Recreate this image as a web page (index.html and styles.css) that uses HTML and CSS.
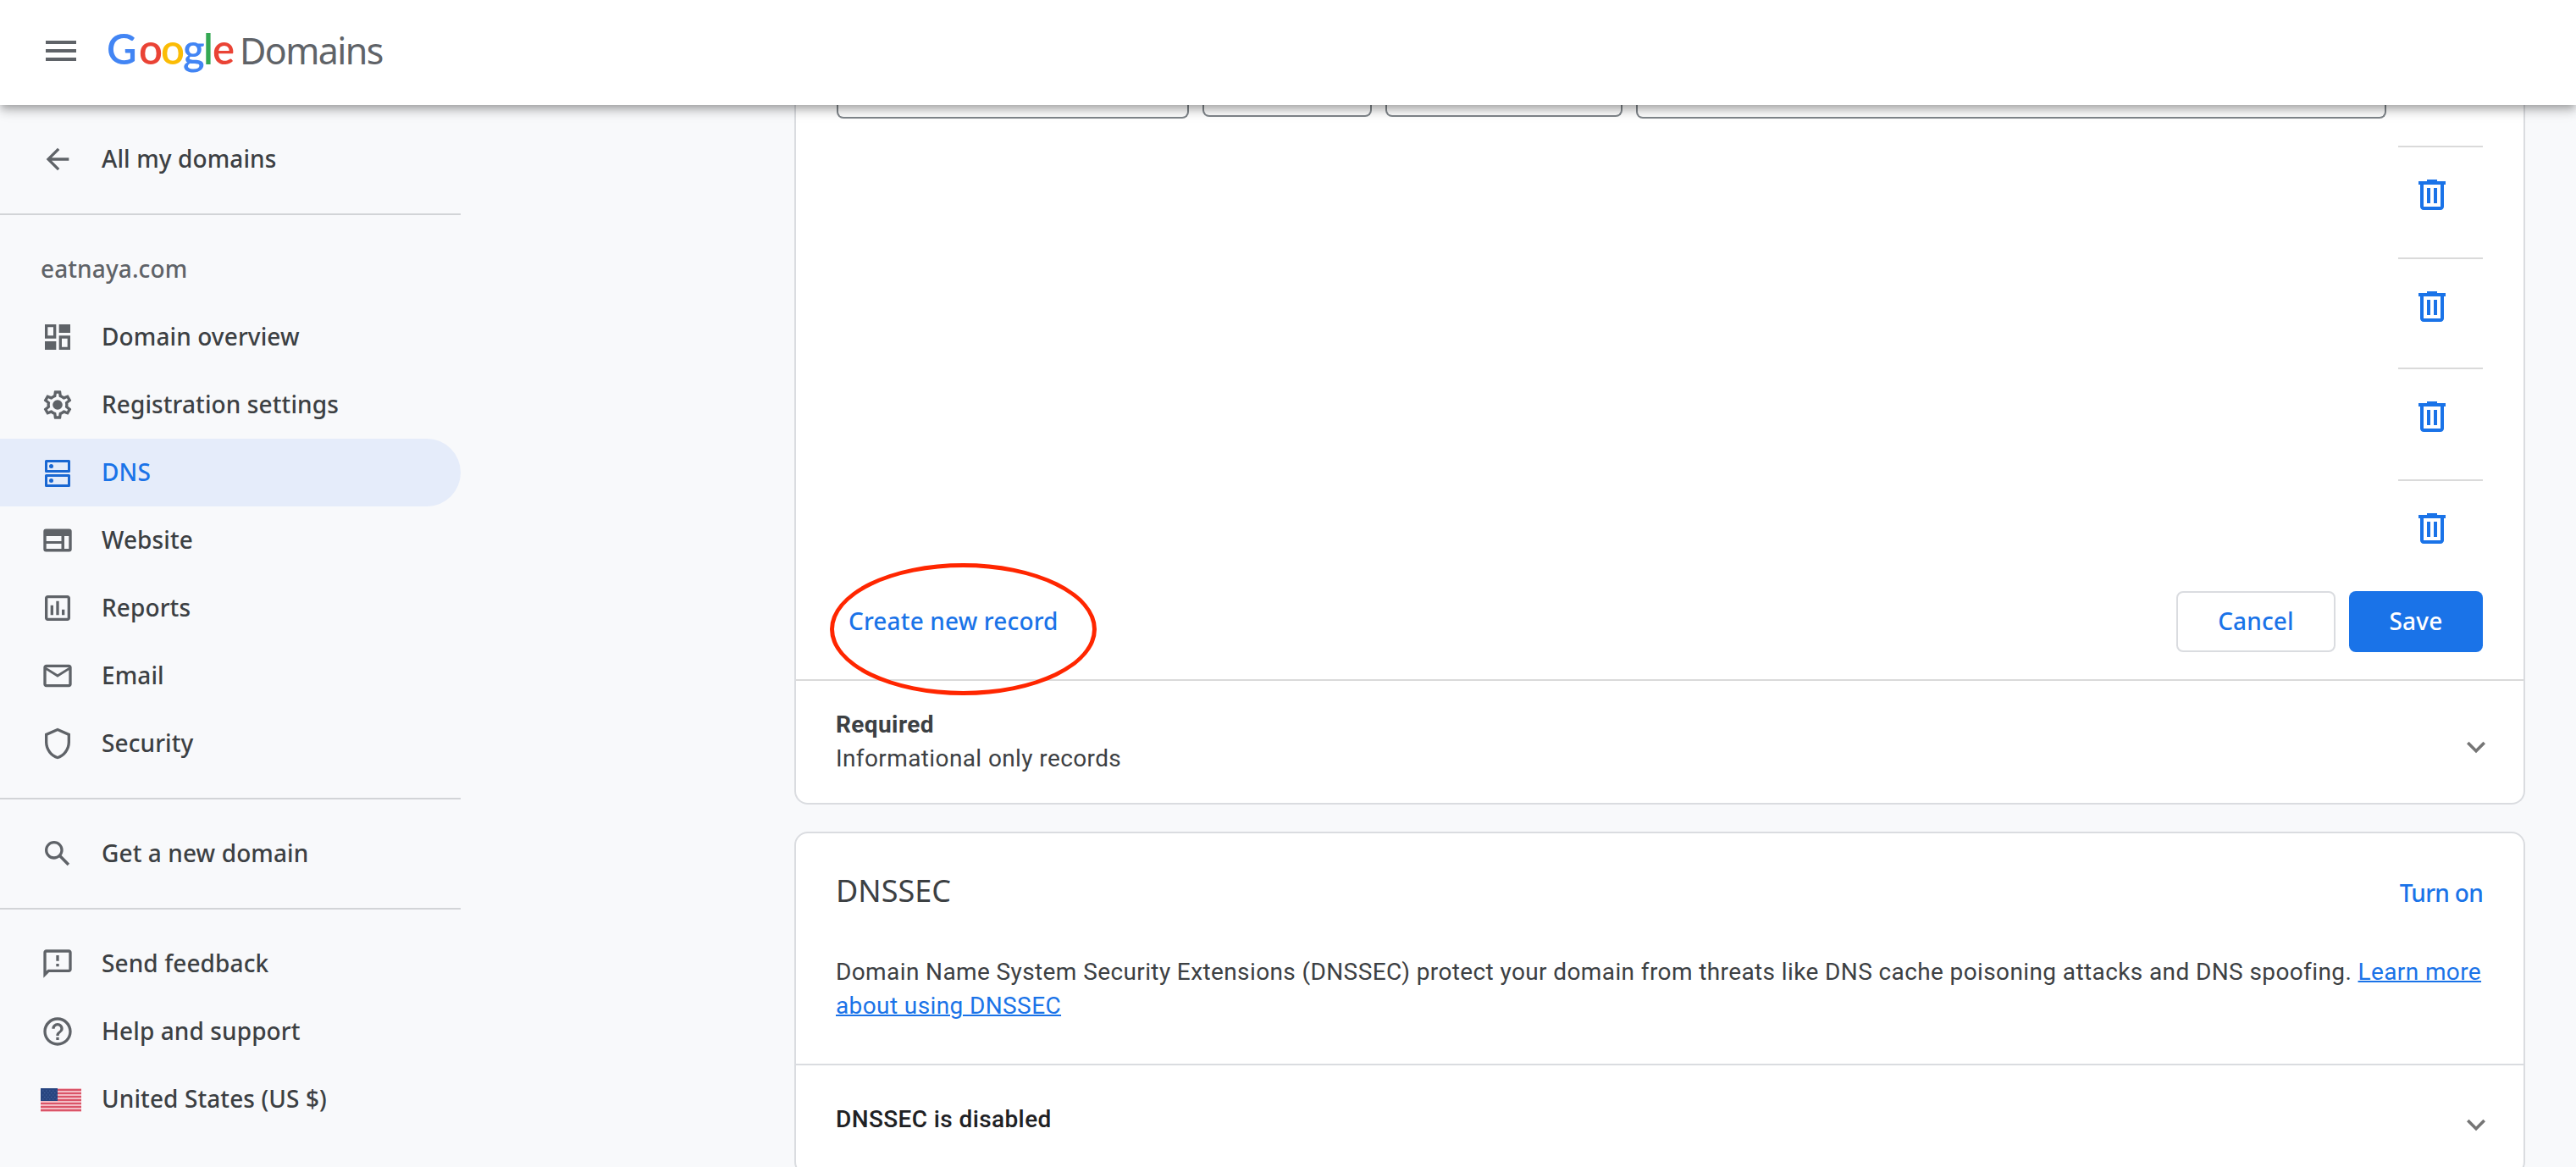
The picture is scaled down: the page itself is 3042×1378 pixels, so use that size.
FILE: index.html
```
<!DOCTYPE html>
<html lang="en">
<head>
    <meta charset="UTF-8">
    <meta name="viewport" content="width=device-width, initial-scale=1.0">
    <title>Google Domains - DNS</title>
    <link rel="stylesheet" href="styles.css">
</head>
<body>

<header class="topbar">
    <svg class="menu-icon" viewBox="0 0 24 24"><path d="M3 18h18v-2H3v2zm0-5h18v-2H3v2zm0-7v2h18V6H3z"/></svg>
    <svg class="logo" viewBox="0 0 340 60">
        <text class="logo-google" y="44"><tspan class="blue" x="-2">G</tspan><tspan class="red" x="36">o</tspan><tspan class="yellow" x="62">o</tspan><tspan class="blue" x="88">g</tspan><tspan class="green" x="112">l</tspan><tspan class="red" x="123">e</tspan></text>
        <text class="logo-domains" x="155" y="44">Domains</text>
    </svg>
</header>

<div class="page">
    <nav class="sidebar">
        <div class="nav-group">
            <a class="nav-item">
                <svg class="icon" viewBox="0 0 24 24"><path d="M20 11H7.83l5.59-5.59L12 4l-8 8 8 8 1.41-1.41L7.83 13H20v-2z"/></svg>
                <span>All my domains</span>
            </a>
        </div>
        <div class="nav-group">
            <div class="nav-item domain-name"><span>eatnaya.com</span></div>
            <a class="nav-item">
                <svg class="icon" viewBox="0 0 24 24"><path d="M19 5v2h-4V5h4M9 5v6H5V5h4m10 8v6h-4v-6h4M9 17v2H5v-2h4M21 3h-8v6h8V3zM11 3H3v10h8V3zm10 8h-8v10h8V11zm-10 4H3v6h8v-6z"/><path d="M14 4h6v4h-6zM4 16h6v4H4z"/></svg>
                <span>Domain overview</span>
            </a>
            <a class="nav-item">
                <svg class="icon" viewBox="0 0 24 24"><path d="M19.43 12.98c.04-.32.07-.64.07-.98 0-.34-.03-.66-.07-.98l2.11-1.65c.19-.15.24-.42.12-.64l-2-3.46c-.09-.16-.26-.25-.44-.25-.06 0-.12.01-.17.03l-2.49 1c-.52-.4-1.08-.73-1.69-.98l-.38-2.65C14.46 2.18 14.25 2 14 2h-4c-.25 0-.46.18-.49.42l-.38 2.65c-.61.25-1.17.59-1.69.98l-2.49-1c-.06-.02-.12-.03-.18-.03-.17 0-.34.09-.43.25l-2 3.46c-.13.22-.07.49.12.64l2.11 1.65c-.04.32-.07.65-.07.98 0 .33.03.66.07.98l-2.11 1.65c-.19.15-.24.42-.12.64l2 3.46c.09.16.26.25.44.25.06 0 .12-.01.17-.03l2.49-1c.52.4 1.08.73 1.69.98l.38 2.65c.03.24.24.42.49.42h4c.25 0 .46-.18.49-.42l.38-2.65c.61-.25 1.17-.59 1.69-.98l2.49 1c.06.02.12.03.18.03.17 0 .34-.09.43-.25l2-3.46c.12-.22.07-.49-.12-.64l-2.11-1.65zm-1.98-1.71c.04.31.05.52.05.73 0 .21-.02.43-.05.73l-.14 1.13.89.7 1.08.84-.7 1.21-1.27-.51-1.04-.42-.9.68c-.43.32-.84.56-1.25.73l-1.06.43-.16 1.13-.2 1.35h-1.4l-.19-1.35-.16-1.13-1.06-.43c-.43-.18-.83-.41-1.23-.71l-.91-.7-1.06.43-1.27.51-.7-1.21 1.08-.84.89-.7-.14-1.13c-.03-.31-.05-.54-.05-.74s.02-.43.05-.73l.14-1.13-.89-.7-1.08-.84.7-1.21 1.27.51 1.04.42.9-.68c.43-.32.84-.56 1.25-.73l1.06-.43.16-1.13.2-1.35h1.39l.19 1.35.16 1.13 1.06.43c.43.18.83.41 1.23.71l.91.7 1.06-.43 1.27-.51.7 1.21-1.07.85-.89.7.14 1.13z"/><circle cx="12" cy="12" r="3.5"/></svg>
                <span>Registration settings</span>
            </a>
            <a class="nav-item selected">
                <svg class="icon" viewBox="0 0 40 40"><path fill-rule="evenodd" d="M6.5 5h27A1.5 1.5 0 0 1 35 6.5v12a1.5 1.5 0 0 1-1.5 1.5h-27A1.5 1.5 0 0 1 5 18.5v-12A1.5 1.5 0 0 1 6.5 5zM8 8v9h24V8zM6.500 22h27a1.500 1.500 0 0 1 1.500 1.500v12a1.500 1.500 0 0 1-1.500 1.500h-27A1.500 1.500 0 0 1 5 35.500v-12A1.500 1.500 0 0 1 6.500 22zM8 25v9h24v-9z"/><circle cx="12.5" cy="12.5" r="2.500"/><circle cx="12.5" cy="29.5" r="2.500"/></svg>
                <span>DNS</span>
            </a>
            <a class="nav-item">
                <svg class="icon" viewBox="0 0 40 40"><path fill-rule="evenodd" d="M6.300 6.500h27.400a3 3 0 0 1 3 3v21a3 3 0 0 1-3 3H6.300a3 3 0 0 1-3-3v-21a3 3 0 0 1 3-3zM6.700 15v6h17.800v-6zM6.700 24v6h17.800v-6zM28 15v15h5.300V15z"/></svg>
                <span>Website</span>
            </a>
            <a class="nav-item">
                <svg class="icon" viewBox="0 0 24 24"><path d="M9 17H7v-7h2v7zm4 0h-2V7h2v10zm4 0h-2v-4h2v4zm2 2H5V5h14v14zm0-16H5c-1.1 0-2 .9-2 2v14c0 1.1.9 2 2 2h14c1.1 0 2-.9 2-2V5c0-1.1-.9-2-2-2z"/></svg>
                <span>Reports</span>
            </a>
            <a class="nav-item">
                <svg class="icon" viewBox="0 0 24 24"><path d="M20 4H4c-1.1 0-2 .9-2 2v12c0 1.1.9 2 2 2h16c1.1 0 2-.9 2-2V6c0-1.1-.9-2-2-2zm0 14H4V8l8 5 8-5v10zm-8-7L4 6h16l-8 5z"/></svg>
                <span>Email</span>
            </a>
            <a class="nav-item">
                <svg class="icon" viewBox="0 0 24 24"><path d="M12 1L3 5v6c0 5.55 3.84 10.74 9 12 5.16-1.26 9-6.45 9-12V5l-9-4zm7 10c0 4.52-2.98 8.69-7 9.93-4.02-1.23-7-5.4-7-9.93V6.3l7-3.11 7 3.11V11z"/></svg>
                <span>Security</span>
            </a>
        </div>
        <div class="nav-group">
            <a class="nav-item">
                <svg class="icon" viewBox="0 0 24 24"><path d="M20.49 19l-5.73-5.73C15.53 12.2 16 10.91 16 9.5A6.5 6.5 0 1 0 9.5 16c1.41 0 2.7-.47 3.77-1.24L19 20.49 20.49 19zM5 9.5C5 7.01 7.01 5 9.5 5S14 7.01 14 9.5 11.99 14 9.5 14 5 11.99 5 9.5z"/></svg>
                <span>Get a new domain</span>
            </a>
        </div>
        <div class="nav-group">
            <a class="nav-item">
                <svg class="icon" viewBox="0 0 24 24"><path d="M20 2H4c-1.1 0-1.99.9-1.99 2L2 22l4-4h14c1.1 0 2-.9 2-2V4c0-1.1-.9-2-2-2zm0 14H5.17l-.59.59-.58.58V4h16v12zm-9-4h2v2h-2zm0-6h2v4h-2z"/></svg>
                <span>Send feedback</span>
            </a>
            <a class="nav-item">
                <svg class="icon" viewBox="0 0 24 24"><path d="M11 18h2v-2h-2v2zm1-16C6.48 2 2 6.48 2 12s4.48 10 10 10 10-4.48 10-10S17.52 2 12 2zm0 18c-4.41 0-8-3.59-8-8s3.59-8 8-8 8 3.59 8 8-3.59 8-8 8zm0-14c-2.21 0-4 1.79-4 4h2c0-1.1.9-2 2-2s2 .9 2 2c0 2-3 1.75-3 5h2c0-2.25 3-2.5 3-5 0-2.21-1.79-4-4-4z"/></svg>
                <span>Help and support</span>
            </a>
            <a class="nav-item">
                <svg class="flag" viewBox="0 0 48 28">
                    <rect width="48" height="28" fill="#f3bcc4"/>
                    <path d="M0 2h48M0 6h48M0 10h48M0 14h48M0 18h48M0 22h48M0 26h48" stroke="#da5468" stroke-width="2"/>
                    <rect width="20" height="15" fill="#274580"/>
                    <path d="M2 3h17M4 5.500h14M2 8h17M4 10.500h14M2 13h17" stroke="#45639c" stroke-dasharray="1.500 2.500"/>
                </svg>
                <span>United States (US $)</span>
            </a>
        </div>
    </nav>

    <main class="content">
        <section class="card records-card">
            <div class="records">
                <div class="fields">
                    <div class="field host"></div>
                    <div class="field type"></div>
                    <div class="field ttl"></div>
                    <div class="field data"></div>
                </div>
                <div class="record-row">
                    <svg class="trash" viewBox="0 0 24 24"><path d="M15 4V3H9v1H4v2h1v13c0 1.1.9 2 2 2h10c1.1 0 2-.9 2-2V6h1V4h-5zm2 15H7V6h10v13zM9 8h2v9H9zm4 0h2v9h-2z"/></svg>
                </div>
                <div class="record-row short">
                    <svg class="trash" viewBox="0 0 24 24"><path d="M15 4V3H9v1H4v2h1v13c0 1.1.9 2 2 2h10c1.1 0 2-.9 2-2V6h1V4h-5zm2 15H7V6h10v13zM9 8h2v9H9zm4 0h2v9h-2z"/></svg>
                </div>
                <div class="record-row">
                    <svg class="trash" viewBox="0 0 24 24"><path d="M15 4V3H9v1H4v2h1v13c0 1.1.9 2 2 2h10c1.1 0 2-.9 2-2V6h1V4h-5zm2 15H7V6h10v13zM9 8h2v9H9zm4 0h2v9h-2z"/></svg>
                </div>
                <div class="record-row">
                    <svg class="trash" viewBox="0 0 24 24"><path d="M15 4V3H9v1H4v2h1v13c0 1.1.9 2 2 2h10c1.1 0 2-.9 2-2V6h1V4h-5zm2 15H7V6h10v13zM9 8h2v9H9zm4 0h2v9h-2z"/></svg>
                </div>
                <div class="actions">
                    <button class="btn btn-text">Create new record<span class="highlight"></span></button>
                    <button class="btn btn-outline">Cancel</button>
                    <button class="btn btn-primary">Save</button>
                </div>
            </div>
            <div class="panel required">
                <div>
                    <div class="required-title">Required</div>
                    <div>Informational only records</div>
                </div>
                <svg class="chevron" viewBox="0 0 24 24"><path d="M7.41 8.59 12 13.17l4.59-4.58L18 10l-6 6-6-6z"/></svg>
            </div>
        </section>

        <section class="card">
            <div class="dnssec">
                <div class="dnssec-head">
                    <h2>DNSSEC</h2>
                    <a class="turn-on">Turn on</a>
                </div>
                <p>Domain Name System Security Extensions (DNSSEC) protect your domain from threats like DNS cache poisoning attacks and DNS spoofing. <a class="link">Learn more</a> <a class="link">about using DNSSEC</a></p>
            </div>
            <div class="panel status">
                <div class="status-title">DNSSEC is disabled</div>
                <svg class="chevron" viewBox="0 0 24 24"><path d="M7.41 8.59 12 13.17l4.59-4.58L18 10l-6 6-6-6z"/></svg>
            </div>
        </section>
    </main>
</div>

</body>
</html>
```
FILE: styles.css
```
* {
    box-sizing: border-box;
}
body {
    margin: 0;
    height: 1378px;
    overflow: hidden;
    background-color: #f8f9fb;
    color: #3c4043;
    font-family: 'Roboto', sans-serif;
    font-size: 28px;
    line-height: 40px;
    letter-spacing: 0.39px;
}
.topbar {
    position: relative;
    z-index: 1;
    display: flex;
    align-items: center;
    height: 124px;
    padding: 0 48px 4px;
    background: white;
    box-shadow: 0 4px 8px -2px rgba(0, 0, 0, 0.2), 0 8px 10px rgba(0, 0, 0, 0.14), 0 2px 20px rgba(0, 0, 0, 0.12);
}
.menu-icon {
    width: 48px;
    height: 48px;
    margin-right: 32px;
    fill: #5f6368;
}
.logo {
    width: 340px;
    height: 60px;
    margin-top: 4px;
    overflow: visible;
    letter-spacing: 0;
}
.logo-google {
    font: 600 49px 'Lato', sans-serif;
}
.logo-domains {
    font: 400 43px 'Noto Sans', sans-serif;
    letter-spacing: -1.6px;
    fill: #5f6368;
}
.blue {
    fill: #4285f4;
}
.red {
    fill: #ea4335;
}
.yellow {
    fill: #fbbc05;
}
.green {
    fill: #34a853;
}
.page {
    display: flex;
    align-items: flex-start;
}

/* sidebar */
.sidebar {
    width: 544px;
    font-family: 'Noto Sans', sans-serif;
    font-weight: 500;
    letter-spacing: 0.1px;
}
.nav-group {
    padding: 24px 0;
    border-bottom: 2px solid #d2d4d7;
}
.nav-group:last-child {
    border-bottom: none;
}
.nav-item {
    display: flex;
    align-items: center;
    height: 80px;
    padding-left: 48px;
}
.nav-item span {
    padding-bottom: 2px;
}
.domain-name {
    color: #5f6368;
}
.icon {
    width: 40px;
    height: 40px;
    margin-right: 32px;
    fill: #5f6368;
}
.flag {
    width: 48px;
    height: 28px;
    margin: 2px 24px 0 0;
}
.selected {
    background: #e5ecfa;
    border-radius: 0 40px 40px 0;
    color: #1a73e8;
}
.selected .icon {
    fill: #1967d2;
}

/* cards */
.content {
    width: 2044px;
    margin-left: 394px;
}
.card {
    background: white;
    border: 2px solid #dadce0;
    border-radius: 16px;
}
.records-card {
    margin-bottom: 32px;
    border-top: none;
    border-radius: 0 0 16px 16px;
}
.records {
    padding: 0 48px 32px;
    border-bottom: 2px solid #dadada;
}
.fields {
    display: flex;
    align-items: flex-start;
    gap: 16px;
    height: 48px;
}
.field {
    height: 16px;
    border: 2px solid #80868b;
    border-top: none;
    border-radius: 0 0 8px 8px;
}
.host {
    width: 416px;
}
.type {
    width: 200px;
    height: 14px;
}
.ttl {
    width: 280px;
    height: 14px;
}
.data {
    width: 886px;
}
.record-row {
    width: 100px;
    height: 132px;
    margin-left: auto;
    padding: 32px 16px;
    border-top: 2px solid #dadada;
}
.short {
    height: 130px;
}
.trash {
    display: block;
    width: 48px;
    height: 48px;
    fill: #1a73e8;
}
.actions {
    display: flex;
    gap: 16px;
}
.btn {
    height: 72px;
    padding: 0 0 2px;
    border: none;
    border-radius: 8px;
    background: none;
    color: #1a73e8;
    font: 500 28px 'Noto Sans', sans-serif;
    letter-spacing: 0.15px;
}
.btn-text {
    position: relative;
    margin-right: auto;
    padding: 0 14px 2px;
}
.btn-outline {
    width: 188px;
    border: 2px solid #dadce0;
}
.btn-primary {
    width: 158px;
    background: #1a73e8;
    color: white;
}
/* red marker drawn round the create button */
.highlight {
    position: absolute;
    left: -8px;
    top: -33px;
    width: 315px;
    height: 156px;
    border: 5.5px solid #ff2600;
    border-radius: 50%;
}
.panel {
    display: flex;
    align-items: center;
    justify-content: space-between;
    padding: 0 34px 0 47px;
}
.required {
    height: 144px;
}
.required-title {
    font-weight: 700;
}
.chevron {
    width: 44px;
    height: 44px;
    margin-top: 12px;
    fill: #757575;
}
.dnssec {
    padding: 44px 48px 48px 47px;
    border-bottom: 2px solid #dadce0;
}
.dnssec-head {
    display: flex;
    align-items: baseline;
    justify-content: space-between;
    height: 48px;
    margin-bottom: 52px;
    font-family: 'Noto Sans', sans-serif;
    line-height: 48px;
}
h2 {
    margin: 0;
    font-size: 36px;
    font-weight: 400;
    letter-spacing: 0;
}
.turn-on {
    color: #1a73e8;
    font-weight: 500;
    letter-spacing: -0.7px;
}
p {
    margin: 0;
}
.link {
    color: #1a73e8;
    text-decoration: underline;
    text-decoration-thickness: 2px;
}
.status {
    height: 128px;
}
.status-title {
    color: #202124;
    font-weight: 500;
}
```
